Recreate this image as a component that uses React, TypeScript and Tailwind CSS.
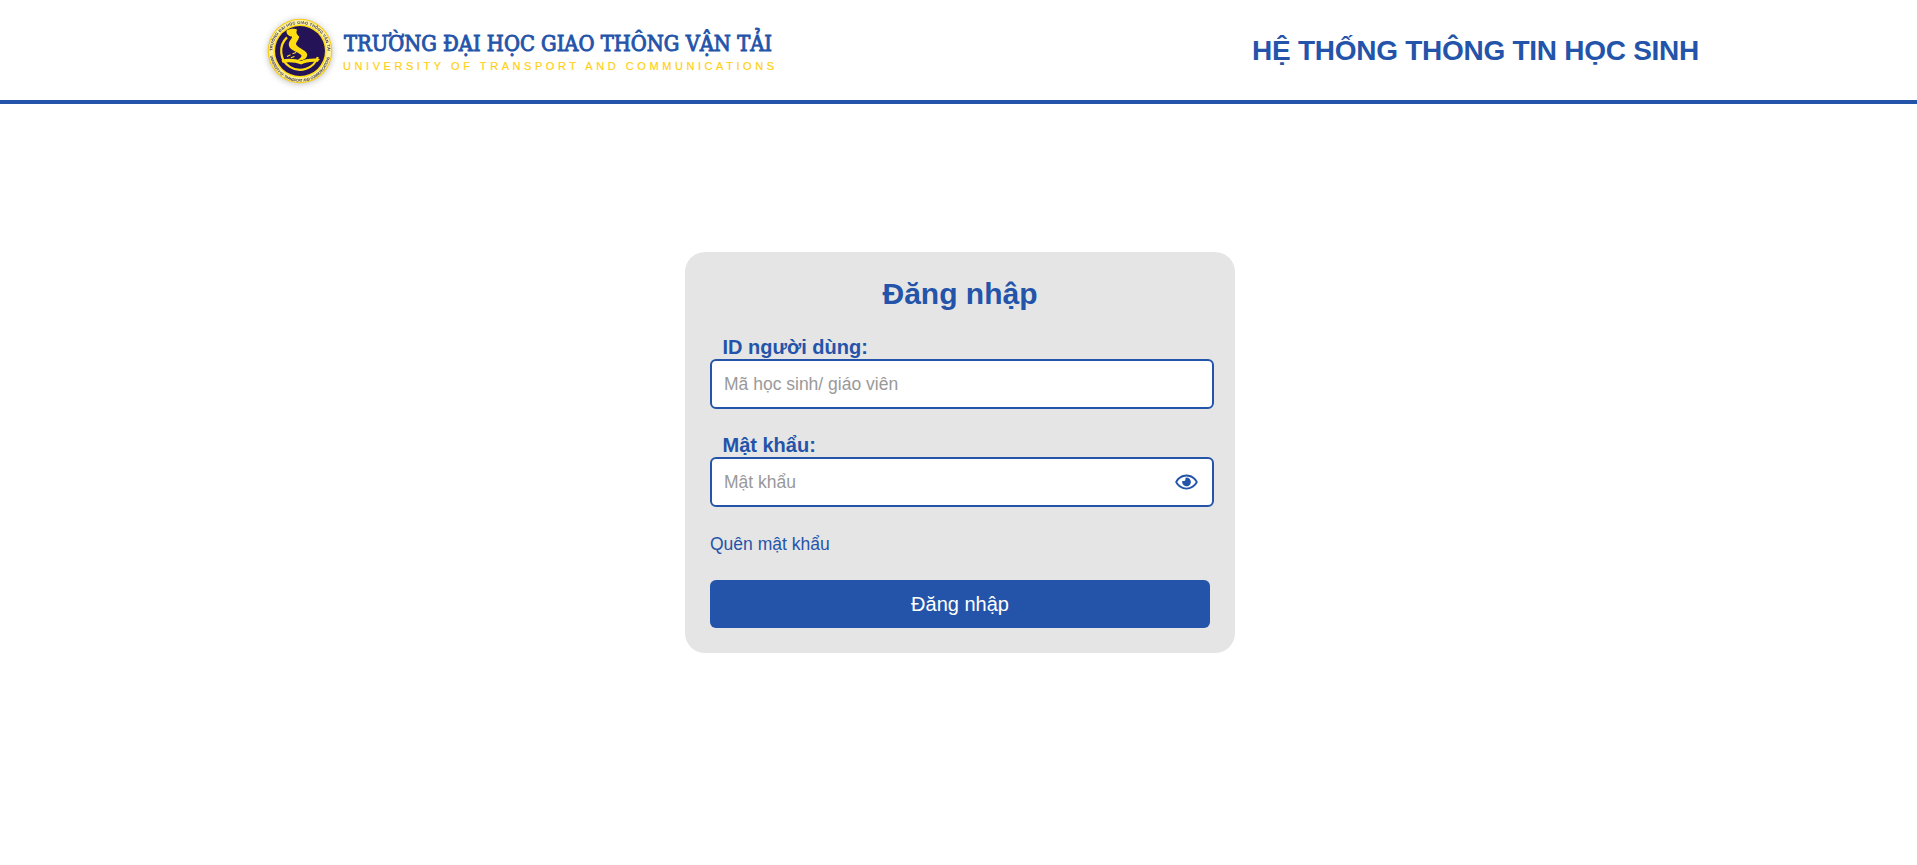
import { FaRegEye } from "react-icons/fa";

function Emblem() {
  return (
    <svg width="90" height="90" viewBox="-45 -46 90 90" className="block drop-shadow-[0_1px_3px_rgba(0,0,0,0.25)]" aria-hidden="true">
      <defs>
        <path id="arcTop" d="M-27.1 5A27.5 27.5 0 1 1 27.1 5" />
        <path id="arcBottom" d="M-30 4A30.2 30.2 0 0 0 30 4" />
      </defs>
      <circle r="32.3" fill="#f7cb10" />
      <circle r="31.2" fill="#fbf0a6" />
      <circle r="26.6" fill="#ffdd10" />
      <circle r="25" fill="#241357" />
      <g fontFamily="Liberation Sans, sans-serif" fontWeight="700" fontSize="4" fill="#3b3350">
        <text><textPath href="#arcTop" startOffset="5" textLength="86">TRƯỜNG ĐẠI HỌC GIAO THÔNG VẬN TẢI</textPath></text>
        <text><textPath href="#arcBottom" startOffset="1" textLength="84" lengthAdjust="spacingAndGlyphs">UNIVERSITY OF TRANSPORT AND COMMUNICATIONS</textPath></text>
      </g>
      <path d="M-13 -13.6A18.8 18.8 0 1 0 17.8 6" fill="none" stroke="#ffdd10" strokeWidth="2.2" />
      <path d="M-13.5 -20.5C-10 -22.5 -5 -22.6 -3 -21.5C-4 -18 -3.6 -17 -.8 -14.5C-1.5 -10 -5 -8.5 -3.6 -6C-1 -2 7.2 -1 7.2 4C6.8 8.8 1 9.8 -4 9.6C0 8 2.2 5.6 1.2 4C-2 .8 -10.5 -.5 -11.2 -6C-11.4 -10.5 -7.4 -12.5 -8 -14.5C-11.4 -14.5 -13.8 -17 -13.5 -20.5Z" fill="#ffdd10" />
      <path d="M-18.5 9C-12 7 -4 7.8 1 10C7 7.5 14 7.2 20 8L17.4 11C11 10.4 6 11.2 1.2 13.6C-5 11 -11 10.7 -17.5 11.7Z" fill="#ffdd10" />
      <path d="M-13 5.5L-9.5 3.8M-7.5 2.8L-4 1.6M-9 6.8L-5.5 5.4" stroke="#ffdd10" strokeWidth="1.1" />
    </svg>
  );
}

function Logo() {
  return (
    <div className="flex h-[100px] items-center">
      <Emblem />
      <svg width="440" height="72" viewBox="0 -6 440 72" className="-ml-[2px] block overflow-visible" role="img" aria-label="Trường Đại học Giao thông Vận tải">
        <text x="1" y="30.5" fill="#2454a9" stroke="#2454a9" strokeWidth="0.9" fontSize="21.6" fontFamily="DejaVu Serif Condensed, DejaVu Serif, serif" textLength="428" lengthAdjust="spacingAndGlyphs">
          TRƯỜNG ĐẠI HỌC GIAO THÔNG VẬN TẢI
        </text>
        <text x="0" y="50.2" fill="#ffd014" stroke="#ffd014" strokeWidth="0.2" fontSize="11" fontFamily="Liberation Sans, Arial, sans-serif" textLength="431">
          UNIVERSITY OF TRANSPORT AND COMMUNICATIONS
        </text>
      </svg>
    </div>
  );
}

const inputClass =
  "block h-[50px] w-[504px] rounded-md border-2 border-[#2454a9] bg-white px-3 text-[17.5px] text-black outline-none placeholder:text-[#999999]";
const labelClass = "ml-[12.5px] block text-xl leading-[23px] font-bold text-[#2454a9]";

export default function App() {
  return (
    <div className="min-h-[865px] bg-white font-['Liberation_Sans',Arial,sans-serif]">
      <header className="flex h-[104px] items-center justify-between border-b-4 border-[#2454a9] pr-[218px] pl-[255px]">
        <Logo />
        <h1 className="pt-0.5 text-[28px] leading-8 font-bold tracking-[-0.27px] text-[#2454a9]">HỆ THỐNG THÔNG TIN HỌC SINH</h1>
      </header>
      <main className="pt-[148px] pl-[685px]">
        <form className="h-[401px] w-[550px] rounded-[20px] bg-[#e5e5e5] px-[25px] pt-[25px]" onSubmit={(e) => e.preventDefault()}>
          <h2 className="text-center text-[30px] leading-[34px] font-bold text-[#2454a9]">Đăng nhập</h2>
          <div className="mt-[25px]">
            <label htmlFor="user" className={labelClass}>ID người dùng:</label>
            <input id="user" className={inputClass} placeholder="Mã học sinh/ giáo viên" />
          </div>
          <div className="mt-[25px]">
            <label htmlFor="password" className={labelClass}>Mật khẩu:</label>
            <div className="relative w-[504px]">
              <input id="password" type="password" className={inputClass} placeholder="Mật khẩu" />
              <button type="button" aria-label="Hiện mật khẩu" className="absolute top-[14.5px] right-4 text-[#2454a9]">
                <FaRegEye className="h-5 w-[23px]" />
              </button>
            </div>
          </div>
          <a href="#" className="mt-7 block text-[17.5px] leading-[18px] text-[#2454a9]">Quên mật khẩu</a>
          <button type="submit" className="mt-[27px] block h-12 w-[500px] rounded-md bg-[#2454a9] text-xl text-white">Đăng nhập</button>
        </form>
      </main>
    </div>
  );
}
